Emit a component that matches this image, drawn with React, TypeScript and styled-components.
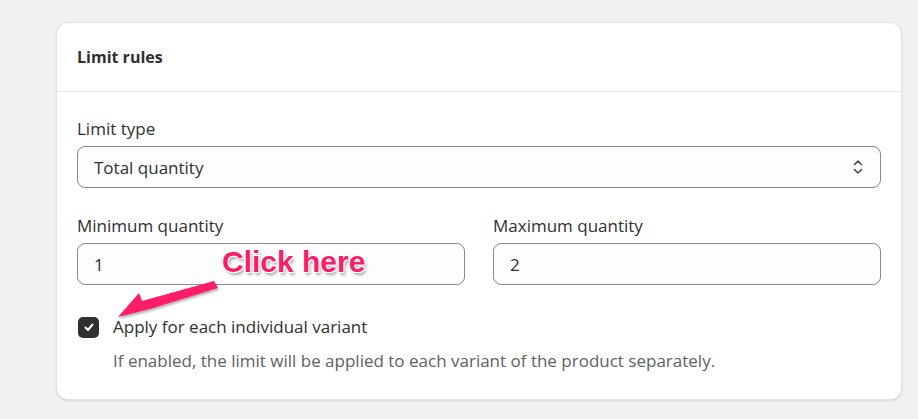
import React from 'react';
import styled, { createGlobalStyle } from 'styled-components';

const Global = createGlobalStyle`
  body {
    margin: 0;
    background: #f1f1f1;
    font-family: "Open Sans", "Noto Sans", sans-serif;
    color: #303030;
  }
`;

const Page = styled.div`
  position: relative;
  width: 918px;
  height: 419px;
  padding: 22px 16px 0 56px;
  box-sizing: border-box;
`;

const Card = styled.section`
  background: #fff;
  border: 1px solid #e3e3e3;
  border-radius: 12px;
  box-shadow: 0 1px 2px rgba(0, 0, 0, 0.12);
`;

const Header = styled.div`
  height: 68px;
  display: flex;
  align-items: center;
  padding: 0 20px;
  border-bottom: 1px solid #e8e8e8;
`;

const Title = styled.h2`
  margin: 0;
  font-size: 16px;
  font-weight: 700;
  color: #303030;
`;

const Body = styled.div`
  padding: 25px 20px 26px;
  display: flex;
  flex-direction: column;
`;

const Field = styled.div`
  display: flex;
  flex-direction: column;
  gap: 5px;
  flex: 1;
`;

const Label = styled.label`
  font-size: 17px;
  line-height: 24px;
  color: #303030;
`;

const Box = styled.div`
  height: 42px;
  border: 1px solid #8a8a8a;
  border-radius: 8px;
  box-sizing: border-box;
  display: flex;
  align-items: center;
  justify-content: space-between;
  padding: 0 16px;
  font-size: 17px;
  color: #303030;
  background: #fdfdfd;
`;

const Row = styled.div`
  display: flex;
  gap: 28px;
  margin-top: 26px;
`;

const CheckRow = styled.div`
  display: flex;
  align-items: center;
  gap: 14px;
  margin-top: 30px;
  padding-left: 1px;
  height: 24px;
`;

const CheckBox = styled.span`
  width: 21px;
  height: 21px;
  border-radius: 5px;
  background: #303030;
  display: flex;
  align-items: center;
  justify-content: center;
`;

const CheckText = styled.span`
  font-size: 17px;
  line-height: 24px;
  color: #303030;
`;

const Help = styled.p`
  margin: 10px 0 0 36px;
  font-size: 17px;
  line-height: 24px;
  color: #616161;
`;

const Annotation = styled.div`
  position: absolute;
  left: 222px;
  top: 245px;
  font-family: "Liberation Sans", Arial, sans-serif;
  font-weight: 700;
  font-size: 30px;
  color: #fc1d68;
  text-shadow: 1px 1px 0 #fff, -1px -1px 0 #fff, 1px -1px 0 #fff, -1px 1px 0 #fff, 2px 3px 3px rgba(0,0,0,0.35);
`;

const Arrow = styled.svg`
  position: absolute;
  left: 100px;
  top: 270px;
`;

export default function App() {
  return (
    <Page>
      <Global />
      <Card>
        <Header>
          <Title>Limit rules</Title>
        </Header>
        <Body>
          <Field>
            <Label>Limit type</Label>
            <Box>
              Total quantity
              <svg width="12" height="18" viewBox="0 0 12 18" fill="none" stroke="#4a4a4a" strokeWidth="1.6" strokeLinecap="round" strokeLinejoin="round">
                <path d="M2.5 6.5 6 3l3.5 3.5" />
                <path d="M2.5 11.5 6 15l3.5-3.5" />
              </svg>
            </Box>
          </Field>
          <Row>
            <Field>
              <Label>Minimum quantity</Label>
              <Box>1</Box>
            </Field>
            <Field>
              <Label>Maximum quantity</Label>
              <Box>2</Box>
            </Field>
          </Row>
          <CheckRow>
            <CheckBox>
              <svg width="12" height="12" viewBox="0 0 12 12" fill="none" stroke="#fff" strokeWidth="2" strokeLinecap="round" strokeLinejoin="round">
                <path d="M2.5 6.5 5 9l4.5-5.5" />
              </svg>
            </CheckBox>
            <CheckText>Apply for each individual variant</CheckText>
          </CheckRow>
          <Help>If enabled, the limit will be applied to each variant of the product separately.</Help>
        </Body>
      </Card>
      <Annotation>Click here</Annotation>
      <Arrow width="130" height="60" viewBox="0 0 130 60">
        <defs>
          <filter id="sh" x="-20%" y="-50%" width="140%" height="200%">
            <feDropShadow dx="1" dy="2" stdDeviation="1.2" floodColor="#000" floodOpacity="0.3" />
          </filter>
        </defs>
        <path
          filter="url(#sh)"
          fill="#fc1d68"
          d="M18 47 L39 23 L42 31 L114 11 L118 18 L50 39 Z"
        />
      </Arrow>
    </Page>
  );
}
